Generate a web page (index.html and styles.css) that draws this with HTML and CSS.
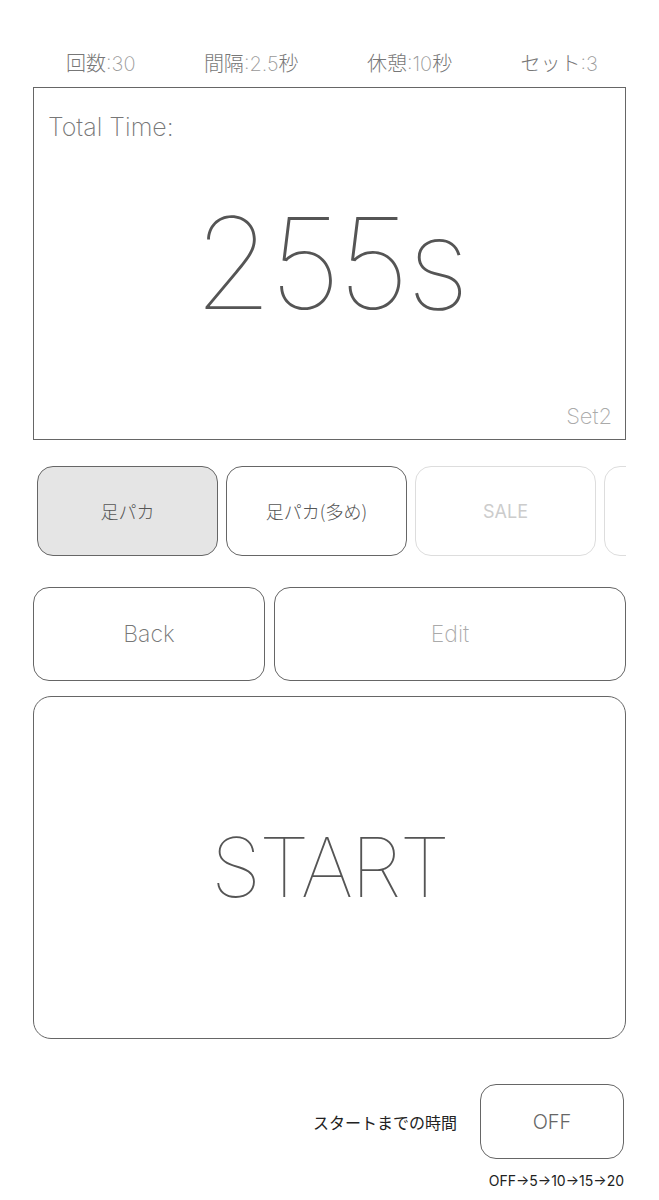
FILE: index.html
```html
<!DOCTYPE html>
<html lang="ja">
<head>
<meta charset="utf-8">
<link rel="stylesheet" href="styles.css">
</head>
<body>
<div class="page">
  <div class="stats">
    <div class="stat"><span class="k">回数</span><span class="v">:30</span></div>
    <div class="stat"><span class="k">間隔</span><span class="v">:2.5</span><span class="k">秒</span></div>
    <div class="stat"><span class="k">休憩</span><span class="v">:10</span><span class="k">秒</span></div>
    <div class="stat"><span class="k">セット</span><span class="v">:3</span></div>
  </div>
  <div class="total">
    <div class="total-label">Total Time:</div>
    <div class="total-value">255s</div>
    <div class="total-set">Set2</div>
  </div>
  <div class="presets">
    <div class="preset active">足パカ</div>
    <div class="preset">足パカ(多め)</div>
    <div class="preset disabled">SALE</div>
    <div class="preset disabled"></div>
  </div>
  <div class="actions">
    <div class="btn back">Back</div>
    <div class="btn edit">Edit</div>
  </div>
  <div class="start">START</div>
  <div class="countdown">
    <div class="cd-label">スタートまでの時間</div>
    <div class="cd-col">
      <div class="cd-btn">OFF</div>
      <div class="cd-hint">OFF→5→10→15→20</div>
    </div>
  </div>
</div>
</body>
</html>
```
FILE: styles.css
```css
html, body {
  margin: 0;
  padding: 0;
  background: #fff;
}
body {
  font-family: Inter, "Noto Sans CJK JP", sans-serif;
}
.page {
  width: 659px;
  padding: 0 33px;
  box-sizing: border-box;
}
.stats {
  display: flex;
  justify-content: space-between;
  align-items: flex-end;
  height: 87px;
  padding: 0 28px 10px 33px;
  box-sizing: border-box;
  font-size: 20px;
  line-height: 26px;
}
.stat { white-space: nowrap; }
.stat .k { color: #777; font-weight: 300; font-family: "Noto Sans CJK JP", sans-serif; }
.stat .v { color: #999; font-weight: 200; }
.total {
  border: 1.5px solid #666;
  height: 353px;
  box-sizing: border-box;
  display: flex;
  flex-direction: column;
  padding: 24px 13px 10px 14px;
}
.total-label {
  font-size: 25px;
  font-weight: 200;
  color: #777;
  line-height: 30px;
}
.total-value {
  flex: 1;
  display: flex;
  align-items: center;
  justify-content: center;
  font-size: 127px;
  font-weight: 100;
  color: #555;
  letter-spacing: -3px;
  padding-bottom: 20px;
}
.total-set {
  text-align: right;
  font-size: 22px;
  font-weight: 200;
  color: #aaa;
  line-height: 26px;
}
.presets {
  display: flex;
  gap: 8px;
  overflow: hidden;
  padding: 26px 0 0 4px;
  box-sizing: border-box;
}
.preset {
  flex: 0 0 181px;
  height: 90px;
  box-sizing: border-box;
  border: 1.5px solid #666;
  border-radius: 16px;
  display: flex;
  align-items: center;
  justify-content: center;
  font-size: 18px;
  color: #555;
  font-family: "Noto Sans CJK JP", sans-serif;
  font-weight: 300;
}
.preset.active { background: #e5e5e5; }
.preset.disabled { border-color: #ddd; color: #ccc; font-family: Inter, sans-serif; font-weight: 400; }
.actions {
  display: flex;
  gap: 9px;
  margin-top: 31px;
}
.btn {
  height: 94px;
  box-sizing: border-box;
  border: 1.5px solid #666;
  border-radius: 16px;
  display: flex;
  align-items: center;
  justify-content: center;
  font-size: 23px;
  font-weight: 200;
}
.back { flex: 0 0 232px; color: #777; }
.edit { flex: 1; color: #aaa; }
.start {
  margin-top: 15px;
  height: 343px;
  box-sizing: border-box;
  border: 1.5px solid #666;
  border-radius: 18px;
  display: flex;
  align-items: center;
  justify-content: center;
  font-size: 82px;
  font-weight: 100;
  letter-spacing: -2px;
  color: #555;
}
.countdown {
  display: flex;
  justify-content: flex-end;
  gap: 23px;
  margin-top: 45px;
}
.cd-label {
  font-size: 16px;
  color: #222;
  height: 75px;
  display: flex;
  align-items: center;
  font-family: "Noto Sans CJK JP", sans-serif;
}
.cd-col {
  display: flex;
  flex-direction: column;
  align-items: flex-end;
  margin-right: 2px;
}
.cd-btn {
  width: 144px;
  height: 75px;
  box-sizing: border-box;
  border: 1.5px solid #666;
  border-radius: 16px;
  display: flex;
  align-items: center;
  justify-content: center;
  font-size: 20px;
  color: #666;
  font-weight: 300;
}
.cd-hint {
  margin-top: 13px;
  font-size: 14px;
  color: #222;
  font-family: Inter, sans-serif;
}
```
